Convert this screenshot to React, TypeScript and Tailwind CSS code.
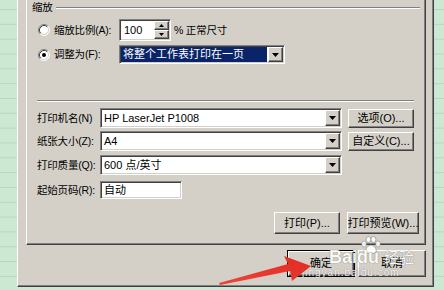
import React from "react";

const sunken =
  "border border-t-[#808080] border-l-[#808080] border-r-white border-b-white shadow-[inset_1px_1px_0_#404040,inset_-1px_-1px_0_#d4d0c8]";
const raised =
  "border border-t-white border-l-white border-r-[#404040] border-b-[#404040] shadow-[inset_-1px_-1px_0_#808080] bg-[#d4d0c8]";

const Radio = ({ checked }: { checked?: boolean }) => (
  <svg width="12" height="12" viewBox="0 0 12 12" className="shrink-0">
    <circle cx="6" cy="6" r="5" fill="#fff" />
    <path d="M2.11 9.89 A5.5 5.5 0 0 1 9.89 2.11" stroke="#808080" fill="none" />
    <path d="M2.82 9.18 A4.5 4.5 0 0 1 9.18 2.82" stroke="#404040" fill="none" />
    <path d="M9.89 2.11 A5.5 5.5 0 0 1 2.11 9.89" stroke="#fff" fill="none" />
    <path d="M9.18 2.82 A4.5 4.5 0 0 1 2.82 9.18" stroke="#d4d0c8" fill="none" />
    {checked && <circle cx="6" cy="6" r="2" fill="#000" />}
  </svg>
);

const Arrow = ({ up, w = 7 }: { up?: boolean; w?: number }) => (
  <svg width={w} height={Math.ceil(w / 2)} viewBox={`0 0 ${w} ${Math.ceil(w / 2)}`}>
    {up ? (
      <polygon points={`0,${Math.ceil(w / 2)} ${w},${Math.ceil(w / 2)} ${w / 2},0`} fill="#000" />
    ) : (
      <polygon points={`0,0 ${w},0 ${w / 2},${Math.ceil(w / 2)}`} fill="#000" />
    )}
  </svg>
);

const DropBtn = () => (
  <div className={`${raised} w-[15px] shrink-0 flex items-center justify-center`}>
    <Arrow />
  </div>
);

interface SelectProps {
  className: string;
  text: string;
  highlight?: boolean;
}

const Select = ({ className, text, highlight }: SelectProps) => (
  <div className={`${sunken} ${className} bg-white flex items-stretch p-[1px]`}>
    <span
      className={`flex-1 flex items-center whitespace-nowrap overflow-hidden ${
        highlight ? "bg-[#0a246a] text-white pl-[2px] mr-[1px]" : "pl-[2px]"
      }`}
    >
      {text}
    </span>
    <DropBtn />
  </div>
);

const Button = ({ className, text }: { className: string; text: string }) => (
  <div className={`${raised} ${className} flex items-center justify-center whitespace-nowrap`}>
    {text}
  </div>
);

const Label = ({ className, text }: { className: string; text: string }) => (
  <span className={`${className} shrink-0 whitespace-nowrap text-[10.5px] tracking-[-0.2px]`}>{text}</span>
);

const Watermark = () => (
  <div className="absolute left-[300px] top-[234px] w-[120px] h-[46px] text-white [text-shadow:0_0_1px_rgba(70,70,70,0.9)] opacity-90">
    <svg width="22" height="18" viewBox="0 0 22 18" className="absolute left-[60px] top-[2px]">
      <g fill="#fff" stroke="rgba(100,100,100,0.7)" strokeWidth="0.7">
        <ellipse cx="4" cy="8" rx="2.4" ry="3" />
        <ellipse cx="8.5" cy="3.5" rx="2.4" ry="3" />
        <ellipse cx="13.5" cy="3.5" rx="2.4" ry="3" />
        <ellipse cx="18" cy="8" rx="2.4" ry="3" />
        <path d="M11 9 C14 9 17 13 16 16 C15 18 13 17 11 17 C9 17 7 18 6 16 C5 13 8 9 11 9 Z" />
      </g>
    </svg>
    <span className="absolute left-[29px] top-[14px] text-[18px] leading-[18px] font-bold font-['Liberation_Sans',sans-serif]">
      Bai
    </span>
    <span className="absolute left-[57px] top-[14px] text-[18px] leading-[18px] font-bold font-['Liberation_Sans',sans-serif]">
      du
    </span>
    <span className="absolute left-[84px] top-[14px] text-[15px] leading-[17px] font-['Noto_Sans_CJK_SC',sans-serif]">
      经验
    </span>
    <span className="absolute left-[2px] top-[33px] text-[10px] leading-[11px] tracking-[1px] font-['Liberation_Sans',sans-serif]">
      jingyan.baidu.com
    </span>
  </div>
);

const RedArrow = () => (
  <svg width="444" height="290" className="absolute left-0 top-0 pointer-events-none">
    <defs>
      <linearGradient id="ar" x1="0" y1="1" x2="1" y2="0">
        <stop offset="0" stopColor="#f04438" />
        <stop offset="1" stopColor="#e02a22" />
      </linearGradient>
    </defs>
    <polygon
      points="219,283 288,264 284,256 311,266 292,281 290,271 220,285"
      fill="url(#ar)"
    />
  </svg>
);

export default function App() {
  return (
    <div className="relative w-[444px] h-[290px] overflow-hidden bg-[#cde8d2] bg-[linear-gradient(#b9d5c0_1px,transparent_1px)] bg-size-[100%_14.83px] bg-position-[0_9px] font-['Liberation_Sans','Noto_Sans_CJK_SC',sans-serif] text-[11px] leading-[13px] text-black">
      <div className="flex h-[287px]">
        <div className="w-[17px] shrink-0" />
        {/* dialog */}
        <div className="w-[417px] h-full shrink-0 bg-[#d4d0c8] border-l border-l-white border-r border-r-[#404040] border-b border-b-[#404040] shadow-[inset_-1px_-1px_0_#808080] pl-[8px] flex flex-col">
          {/* tab page */}
          <div className="w-[400px] h-[245px] shrink-0 border-l border-l-white border-r border-r-[#404040] border-b border-b-[#404040] shadow-[inset_-1px_-1px_0_#808080] flex flex-col">
            <div className="h-[15px] flex items-center pl-[5px] pr-[5px]">
              <Label className="" text="缩放" />
              <div className="flex-1 ml-[3px] h-[2px] border-t border-t-[#808080] border-b border-b-white" />
            </div>

            <div className="mt-[4px] h-[22px] flex items-center pl-[11px]">
              <Radio />
              <Label className="ml-[4px] w-[65px]" text="缩放比例(A):" />
              <div className={`${sunken} w-[52px] h-[22px] bg-white flex items-stretch p-[1px]`}>
                <span className="flex-1 flex items-center pl-[3px]">100</span>
                <div className="w-[15px] flex flex-col">
                  <div className={`${raised} flex-1 flex items-center justify-center`}>
                    <Arrow up w={5} />
                  </div>
                  <div className={`${raised} flex-1 flex items-center justify-center`}>
                    <Arrow w={5} />
                  </div>
                </div>
              </div>
              <Label className="ml-[3px]" text="% 正常尺寸" />
            </div>

            <div className="mt-[4px] h-[19px] flex items-center pl-[11px]">
              <Radio checked />
              <Label className="ml-[4px] w-[65px]" text="调整为(F):" />
              <Select className="w-[166px] h-[19px]" text="将整个工作表打印在一页" highlight />
            </div>

            <div className="mt-[36px] ml-[10px] w-[377px] h-[2px] border-t border-t-[#808080] border-b border-b-white" />

            <div className="mt-[6px] h-[20px] flex items-center pl-[10px]">
              <Label className="w-[63px]" text="打印机名(N)" />
              <Select className="w-[242px] h-[20px]" text="HP LaserJet P1008" />
              <Button className="ml-[6px] w-[66px] h-[19px]" text="选项(O)..." />
            </div>

            <div className="mt-[3px] h-[20px] flex items-center pl-[10px]">
              <Label className="w-[63px]" text="纸张大小(Z):" />
              <Select className="w-[242px] h-[20px]" text="A4" />
              <Button className="ml-[6px] w-[66px] h-[19px]" text="自定义(C)..." />
            </div>

            <div className="mt-[4px] h-[20px] flex items-center pl-[10px]">
              <Label className="w-[63px]" text="打印质量(Q):" />
              <Select className="w-[242px] h-[20px]" text="600 点/英寸" />
            </div>

            <div className="mt-[6px] h-[18px] flex items-center pl-[10px]">
              <Label className="w-[63px]" text="起始页码(R):" />
              <div className={`${sunken} w-[82px] h-[18px] bg-white flex items-center pl-[3px]`}>
                自动
              </div>
            </div>

            <div className="mt-[13px] h-[22px] flex justify-end gap-[7px] pr-[6px]">
              <Button className="w-[66px] h-[22px]" text="打印(P)..." />
              <Button className="w-[72px] h-[22px]" text="打印预览(W)..." />
            </div>
          </div>

          {/* dialog buttons */}
          <div className="w-[400px] mt-[5px] flex justify-end gap-[3px]">
            <div className="w-[68px] h-[27px] border border-black flex">
              <Button className="flex-1" text="确定" />
            </div>
            <Button className="w-[68px] h-[27px]" text="取消" />
          </div>
        </div>
        <div className="flex-1" />
      </div>

      <Watermark />
      <RedArrow />
    </div>
  );
}
